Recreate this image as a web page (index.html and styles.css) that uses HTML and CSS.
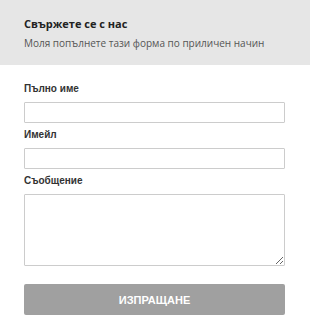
FILE: index.html
```html
<!DOCTYPE html>
<html lang="bg">
<head>
  <meta charset="UTF-8" />
  <meta name="viewport" content="width=device-width, initial-scale=1.0"/>
  <title>Свържете се с нас</title>
  <link rel="stylesheet" href="styles.css">
</head>
<body>

  <div class="contact-box">
    <div class="contact-header">
      <h2>Свържете се с нас</h2>
      <p>Моля попълнете тази форма по приличен начин</p>
    </div>
    <form class="contact-form">
      <label for="name">Пълно име</label>
      <input type="text" id="name" />
      <label for="email">Имейл</label>
      <input type="email" id="email" />
      <label for="message">Съобщение</label>
      <textarea id="message"></textarea>
      <button type="submit" class="btn-send">Изпращане</button>
    </form>
  </div>

</body>
</html>
```

FILE: styles.css
```css
body {
  margin: 0;
  background: #fff;
  font-family: "Liberation Sans", Arial, sans-serif;
}

.contact-box {
  width: 310px;
}

.contact-header {
  background: #e6e6e6;
  height: 65px;
  box-sizing: border-box;
  padding: 16px 24px 0;
  font-family: "Open Sans", sans-serif;
}

.contact-header h2 {
  margin: 0;
  font-size: 11px;
  line-height: 15px;
  font-weight: 700;
  color: #222;
}

.contact-header p {
  margin: 5px 0 0;
  font-size: 10px;
  line-height: 14px;
  color: #555;
}

.contact-form {
  padding: 18px 25px 0 24px;
}

.contact-form label {
  display: block;
  font-size: 10px;
  line-height: 12px;
  font-weight: bold;
  color: #333;
  margin-bottom: 7px;
}

.contact-form input,
.contact-form textarea {
  display: block;
  width: 100%;
  box-sizing: border-box;
  border: 1px solid #ccc;
  border-radius: 1px;
  margin: 0 0 6px;
  padding: 4px;
  outline: none;
}

.contact-form input {
  height: 21px;
}

.contact-form textarea {
  height: 72px;
  margin-bottom: 18px;
}

.btn-send {
  display: block;
  width: 100%;
  height: 31px;
  background: #a0a0a0;
  color: #fff;
  border: none;
  border-radius: 2px;
  font-family: "Liberation Sans", Arial, sans-serif;
  font-size: 11px;
  font-weight: bold;
  text-transform: uppercase;
  cursor: pointer;
}
```
